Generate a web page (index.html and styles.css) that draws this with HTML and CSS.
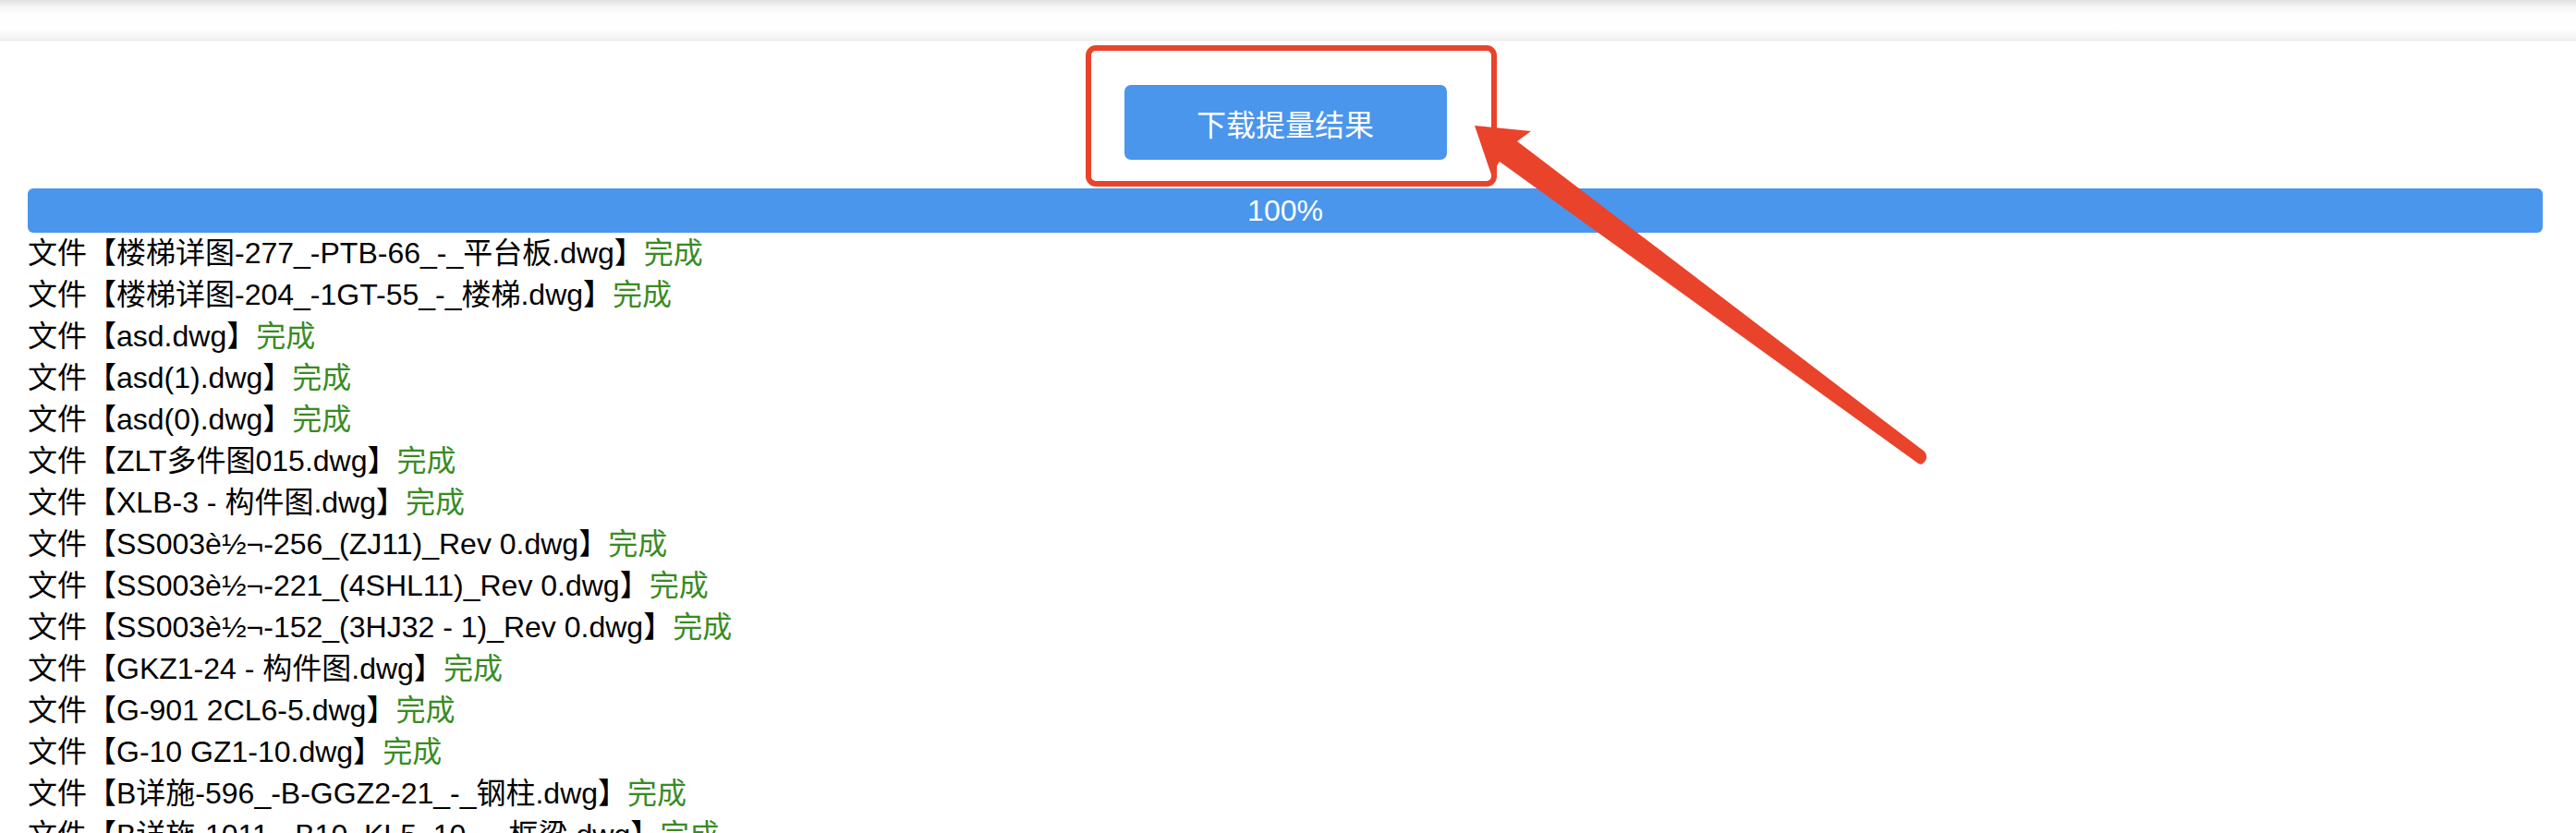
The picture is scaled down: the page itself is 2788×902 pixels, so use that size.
FILE: index.html
```html
<!DOCTYPE html>
<html lang="zh-CN">
<head>
    <meta charset="UTF-8">
    <meta name="viewport" content="width=device-width, initial-scale=1.0">
    <title>提量结果</title>
    <link rel="stylesheet" href="styles.css">
</head>
<body>
    <!-- Top bar -->
    <div class="topbar"></div>

    <div class="main">
        <div class="actions">
            <div class="btn-wrap">
                <button class="download-btn" type="button">下载提量结果</button>
                <!-- annotation box -->
                <div class="mark-box"></div>
            </div>
        </div>

        <div class="progress">
            <div class="progress-fill">100%</div>
        </div>

        <div class="file-list">
            <div class="file-row">文件【楼梯详图-277_-PTB-66_-_平台板.dwg】<span class="done">完成</span></div>
            <div class="file-row">文件【楼梯详图-204_-1GT-55_-_楼梯.dwg】<span class="done">完成</span></div>
            <div class="file-row">文件【asd.dwg】<span class="done">完成</span></div>
            <div class="file-row">文件【asd(1).dwg】<span class="done">完成</span></div>
            <div class="file-row">文件【asd(0).dwg】<span class="done">完成</span></div>
            <div class="file-row">文件【ZLT多件图015.dwg】<span class="done">完成</span></div>
            <div class="file-row">文件【XLB-3 - 构件图.dwg】<span class="done">完成</span></div>
            <div class="file-row">文件【SS003è½¬-256_(ZJ11)_Rev 0.dwg】<span class="done">完成</span></div>
            <div class="file-row">文件【SS003è½¬-221_(4SHL11)_Rev 0.dwg】<span class="done">完成</span></div>
            <div class="file-row">文件【SS003è½¬-152_(3HJ32 - 1)_Rev 0.dwg】<span class="done">完成</span></div>
            <div class="file-row">文件【GKZ1-24 - 构件图.dwg】<span class="done">完成</span></div>
            <div class="file-row">文件【G-901 2CL6-5.dwg】<span class="done">完成</span></div>
            <div class="file-row">文件【G-10 GZ1-10.dwg】<span class="done">完成</span></div>
            <div class="file-row">文件【B详施-596_-B-GGZ2-21_-_钢柱.dwg】<span class="done">完成</span></div>
            <div class="file-row">文件【B详施-1011_-B10_KL5_10_-_框梁.dwg】<span class="done">完成</span></div>
        </div>
    </div>

    <!-- annotation arrow -->
    <svg class="mark-arrow" width="2788" height="902" viewBox="0 0 2788 902">
        <path d="M1596 136 L1657 142 L1642 153 L2083 489 Q2088 496 2081 502 Q2078 504 2075 501 L1623 175 L1614 189 Z" fill="#e9432b"/>
    </svg>
</body>
</html>
```

FILE: styles.css
```css
html, body { margin: 0; padding: 0; background: #fff; overflow: hidden; }
body { font-family: "Liberation Sans", "Noto Sans CJK SC", sans-serif; color: #000; position: relative; }

.topbar { height: 43px; border-bottom: 1px solid #e8e8e8; background: linear-gradient(#e2e2e2 0, #f7f7f7 8px, #fefefe 16px, #fefefe 32px, #f2f2f2 43px); }

.main { padding: 0 36px 0 30px; }

.actions { display: flex; justify-content: center; padding-top: 48px; }
.btn-wrap { position: relative; }
.download-btn { display: flex; align-items: center; justify-content: center; width: 349px; height: 81px; padding: 0; border: 0; border-radius: 7px; background: #4a96ec; color: #fff; font-family: "Noto Sans CJK SC", sans-serif; font-size: 32px; cursor: pointer; }
.mark-box { position: absolute; left: -42px; right: -54px; top: -43px; bottom: -29px; border: 6px solid #e9432b; border-radius: 11px; pointer-events: none; }

.progress { margin-top: 31px; height: 48px; border-radius: 6px; background: #eee; overflow: hidden; }
.progress-fill { width: 100%; height: 100%; background: #4a96ec; color: #fff; font-size: 32px; line-height: 48px; text-align: center; }

.file-list { font-size: 32px; line-height: 45px; }
.file-row { white-space: nowrap; }
.done { color: #388b22; }

.mark-arrow { position: absolute; left: 0; top: 0; pointer-events: none; }
```
